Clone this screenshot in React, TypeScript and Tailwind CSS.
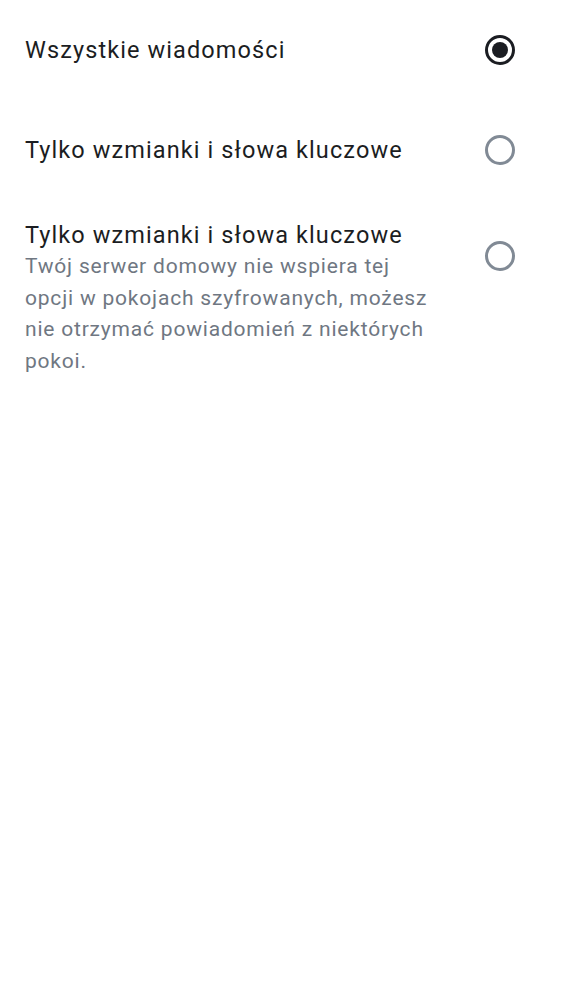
import React, { useState } from 'react';

const options = [
  { id: 'all', title: 'Wszystkie wiadomości' },
  { id: 'mentions', title: 'Tylko wzmianki i słowa kluczowe' },
  {
    id: 'mentions-encrypted',
    title: 'Tylko wzmianki i słowa kluczowe',
    description:
      'Twój serwer domowy nie wspiera tej opcji w pokojach szyfrowanych, możesz nie otrzymać powiadomień z niektórych pokoi.',
  },
];

function Radio({ checked }: { checked: boolean }) {
  return (
    <div
      className={`w-[30px] h-[30px] rounded-full border-[3px] flex items-center justify-center ${
        checked ? 'border-[#1b1d22]' : 'border-[#818a95]'
      }`}
    >
      {checked && <div className="w-[16px] h-[16px] rounded-full bg-[#1b1d22]" />}
    </div>
  );
}

export default function App() {
  const [selected, setSelected] = useState('all');

  return (
    <div className="w-[562px] min-h-[1000px] bg-white" style={{ fontFamily: 'Roboto, "Noto Sans", sans-serif' }}>
      {options.map((o) =>
        o.description ? (
          <div
            key={o.id}
            onClick={() => setSelected(o.id)}
            className="flex items-start justify-between pl-[25px] pr-[47px] py-[20px]"
          >
            <div className="w-[412px]">
              <div className="text-[23.5px] leading-[31px] text-[#1b1d22] tracking-[1.1px] whitespace-nowrap">{o.title}</div>
              <div className="text-[21px] leading-[31.5px] text-[#6f7782] tracking-[0.8px]">{o.description}</div>
            </div>
            <div className="mt-[21px]">
              <Radio checked={selected === o.id} />
            </div>
          </div>
        ) : (
          <div
            key={o.id}
            onClick={() => setSelected(o.id)}
            className="flex items-center justify-between h-[100px] pl-[25px] pr-[47px]"
          >
            <div className="text-[23.5px] leading-[31px] text-[#1b1d22] tracking-[1.1px]">{o.title}</div>
            <Radio checked={selected === o.id} />
          </div>
        )
      )}
    </div>
  );
}
